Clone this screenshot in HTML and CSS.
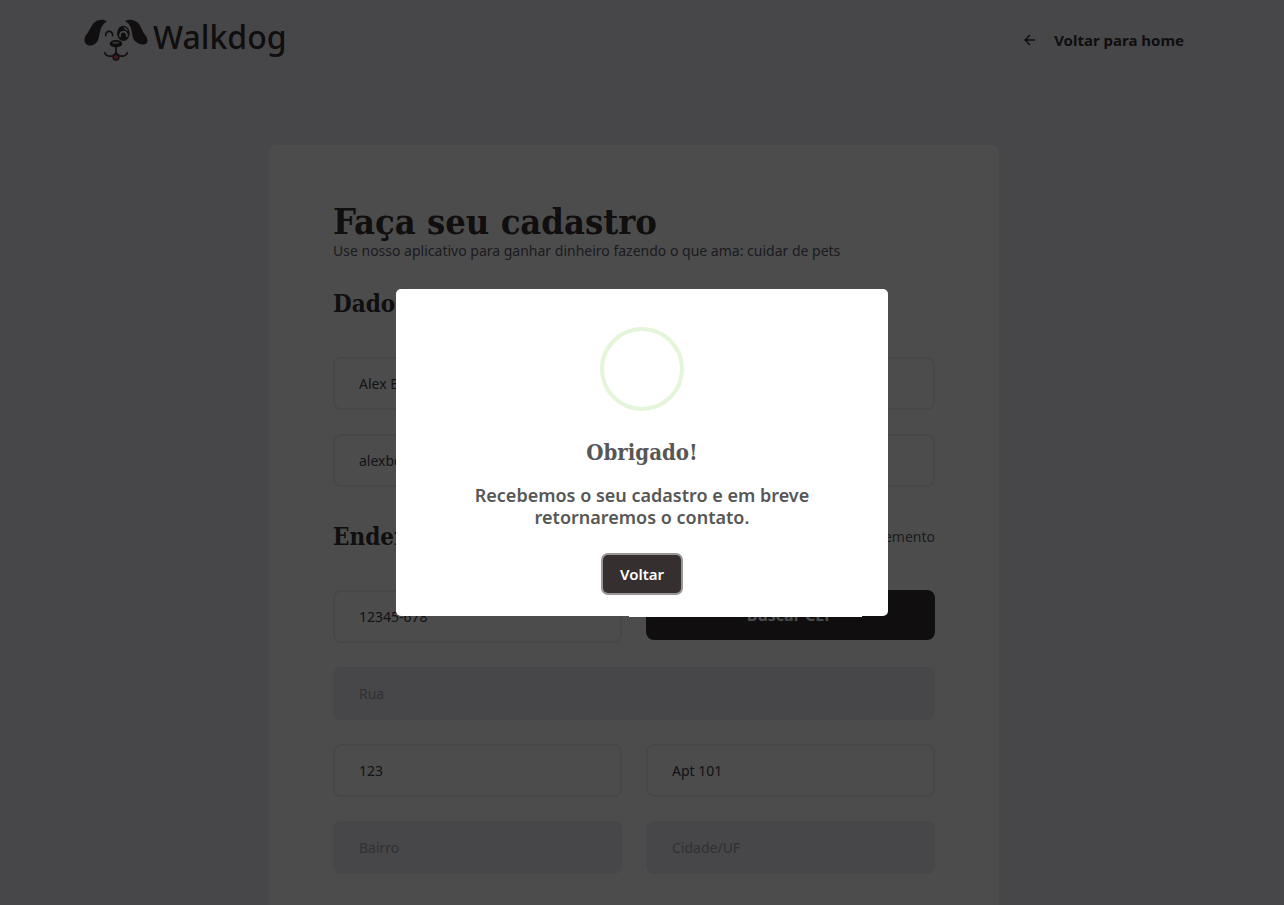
FILE: index.html
```html
<!DOCTYPE html>
<html lang="pt-BR">
<head>
<meta charset="utf-8">
<meta name="viewport" content="width=device-width, initial-scale=1">
<title>Walkdog</title>
<link rel="stylesheet" href="styles.css">
</head>
<body>
<div class="page">
  <header class="header">
    <div class="logo">
      <svg class="logo-dog" viewBox="29 33 192 126" aria-hidden="true">
        <path class="ink" d="M98 40C88 33 72 34 62 42C50 52 46 68 37 79C29 88 28 101 36 109C44 116 58 112 66 104C76 94 74 76 80 61C84 51 90 45 98 40Z"/>
        <path class="ink" d="M152 40C162 33 179 34 189 43C201 54 203 70 213 82C221 92 222 102 215 107C206 113 190 107 181 98C172 89 175 73 169 58C165 49 160 44 152 40Z"/>
        <path class="line" d="M94 83C95 66 114 66 115 83"/>
        <ellipse class="ink" cx="147" cy="76" rx="19" ry="23"/>
        <path class="eye" d="M137 85C135 66 158 66 158 85"/>
        <path class="shine" d="M151 60L158 66"/>
        <ellipse class="ink" cx="125" cy="107" rx="19" ry="11"/>
        <ellipse class="gleam" cx="124" cy="104" rx="10" ry="3"/>
        <circle class="tongue" cx="125" cy="147" r="9"/>
        <path class="line" d="M125 117V133M91 134C96 148 122 148 125 133C129 148 154 148 159 134"/>
      </svg>
      <span class="logo-name">Walkdog</span>
    </div>
    <a class="back" href="#">
      <svg class="back-arrow" viewBox="0 0 12 12" aria-hidden="true"><path d="M11 6H1M6 1L1 6L6 11"/></svg>
      Voltar para home
    </a>
  </header>
  <main>
    <form class="card">
      <h1 class="title">Faça seu cadastro</h1>
      <p class="lead">Use nosso aplicativo para ganhar dinheiro fazendo o que ama: cuidar de pets</p>
      <div class="section-head"><h2>Dados</h2></div>
      <div class="grid">
        <input class="field" aria-label="Nome completo" value="Alex B">
        <input class="field" aria-label="CPF">
        <input class="field" aria-label="E-mail" value="alexbe">
        <input class="field" aria-label="Telefone">
      </div>
      <div class="section-head"><h2>Endereço</h2><span class="hint">Número e complemento</span></div>
      <div class="grid">
        <input class="field" aria-label="CEP" value="12345-678">
        <button class="search" type="button">Buscar CEP</button>
        <input class="field wide" aria-label="Rua" placeholder="Rua" disabled>
        <input class="field" aria-label="Número" value="123">
        <input class="field" aria-label="Complemento" value="Apt 101">
        <input class="field" aria-label="Bairro" placeholder="Bairro" disabled>
        <input class="field" aria-label="Cidade/UF" placeholder="Cidade/UF" disabled>
      </div>
    </form>
  </main>
</div>
<div class="overlay">
  <div class="modal" role="dialog" aria-modal="true" aria-labelledby="modal-title">
    <div class="modal-icon"></div>
    <h2 class="modal-title" id="modal-title">Obrigado!</h2>
    <p class="modal-text">Recebemos o seu cadastro e em breve retornaremos o contato.</p>
    <button class="modal-button" type="button">Voltar</button>
  </div>
</div>
</body>
</html>
```

FILE: styles.css
```css
:root {
  --ink: #362f30;
  --body: #41414d;
  --muted: #5c5c6c;
  --field: #eeeef5;
  --serif: "DejaVu Serif Condensed", "DejaVu Serif", serif;
  --sans: "Noto Sans", sans-serif;
}
* { box-sizing: border-box; margin: 0; }
html, body { height: 100%; }
body {
  overflow: hidden;
  background: var(--field);
  color: var(--ink);
  font: 14px/20px var(--sans);
}
.page {
  height: 100%;
  padding-right: 16px;
  overflow: hidden;
}
.header {
  display: flex;
  align-items: center;
  justify-content: space-between;
  max-width: 1100px;
  height: 80px;
  margin: 0 auto 65px;
}
.logo { display: flex; align-items: flex-start; gap: 5px; }
.logo-dog { width: 64px; height: 42px; }
.logo-name { font: 500 32px/36px var(--sans); }
.ink { fill: var(--ink); }
.line { fill: none; stroke: var(--ink); stroke-width: 5; stroke-linecap: round; }
.eye { fill: none; stroke: #f0f0f5; stroke-width: 5; stroke-linecap: round; }
.shine { stroke: #f0f0f5; stroke-width: 4; stroke-linecap: round; }
.gleam { fill: #b8b6ba; }
.tongue { fill: #e0506a; stroke: var(--ink); stroke-width: 4; }
.back {
  display: flex;
  align-items: center;
  gap: 18px;
  color: var(--ink);
  font-size: 15px;
  font-weight: 700;
  text-decoration: none;
}
.back-arrow { width: 12px; height: 12px; fill: none; stroke: var(--ink); stroke-width: 1.5; }
.card {
  max-width: 730px;
  margin: 0 auto;
  padding: 56px 64px 64px;
  border-radius: 8px;
  background: #fff;
}
.title { font: bold 36px/40px var(--serif); }
.lead { margin-bottom: 28px; color: var(--muted); }
.section-head {
  display: flex;
  align-items: center;
  justify-content: space-between;
  height: 30px;
  margin-bottom: 38px;
}
.section-head h2 { font: bold 24px/30px var(--serif); }
.hint { color: var(--muted); }
.grid {
  display: grid;
  grid-template-columns: 1fr 1fr;
  gap: 24px;
  margin-bottom: 35px;
}
.field {
  width: 100%;
  height: 53px;
  padding: 0 24px;
  border: 2px solid var(--field);
  border-radius: 8px;
  background: #fff;
  color: var(--body);
  font: 14px var(--sans);
}
.field:disabled { background: var(--field); }
.field::placeholder { color: #a0a0b2; opacity: 1; }
.wide { grid-column: 1 / -1; }
.search {
  height: 50px;
  border: 0;
  border-radius: 8px;
  background: var(--ink);
  color: #fff;
  font: bold 16px var(--sans);
}
.overlay {
  position: fixed;
  inset: 0;
  display: flex;
  align-items: center;
  justify-content: center;
  background: rgba(0, 0, 0, 0.7);
}
.modal {
  position: relative;
  display: flex;
  flex-direction: column;
  align-items: center;
  width: 492px;
  max-width: 100%;
  padding: 38px 64px 23px;
  border-radius: 5px;
  background: #fff;
  color: #575757;
  text-align: center;
}
.modal::after {
  content: "";
  position: absolute;
  top: 100%;
  left: 233px;
  width: 233px;
  height: 1px;
  background: #fff;
}
.modal-icon {
  width: 84px;
  height: 84px;
  border: 4px solid #e4f5da;
  border-radius: 50%;
}
.modal-title { margin: 26px 0 17px; font: bold 22px/30px var(--serif); }
.modal-text { margin-bottom: 27px; font: 600 18px/22px var(--sans); }
.modal-button {
  min-width: 78px;
  height: 38px;
  border: 0;
  border-radius: 5px;
  background: var(--ink);
  box-shadow: 0 0 0 2px #9a9697;
  color: #fff;
  font: 600 15px var(--sans);
}
```
